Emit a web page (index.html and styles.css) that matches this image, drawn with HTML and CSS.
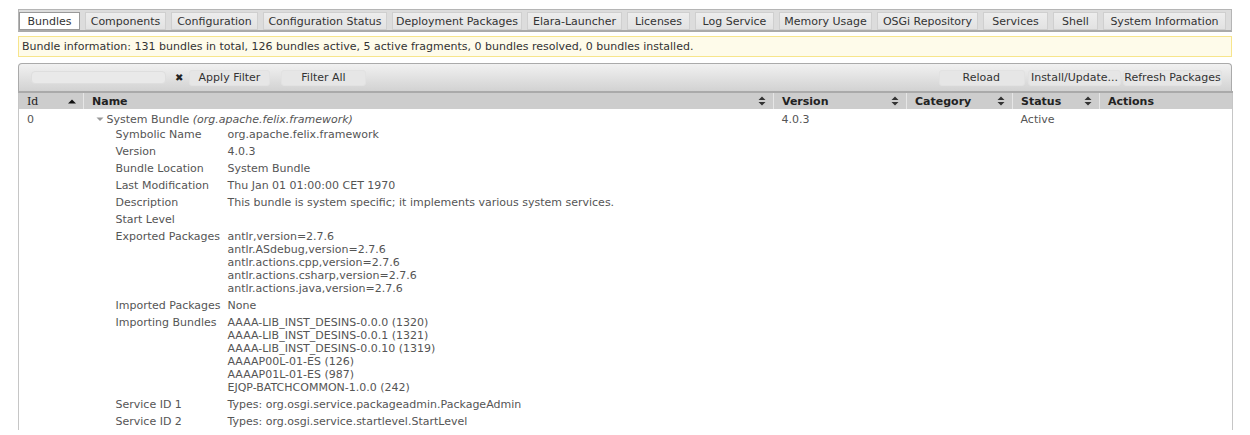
FILE: index.html
```html
<!DOCTYPE html>
<html>
<head>
<meta charset="utf-8">
<title>Bundles</title>
<link rel="stylesheet" href="styles.css">
</head>
<body>
<div class="page">
  <div class="tabs">
    <a class="tab active">Bundles</a>
    <a class="tab">Components</a>
    <a class="tab">Configuration</a>
    <a class="tab">Configuration Status</a>
    <a class="tab">Deployment Packages</a>
    <a class="tab">Elara-Launcher</a>
    <a class="tab">Licenses</a>
    <a class="tab">Log Service</a>
    <a class="tab">Memory Usage</a>
    <a class="tab">OSGi Repository</a>
    <a class="tab">Services</a>
    <a class="tab">Shell</a>
    <a class="tab">System Information</a>
  </div>
  <div class="status">Bundle information: 131 bundles in total, 126 bundles active, 5 active fragments, 0 bundles resolved, 0 bundles installed.</div>
  <div class="toolbar">
    <div class="tb-left">
      <span class="filter-input"></span>
      <span class="clear">&#10006;</span>
      <span class="btn btn-apply">Apply Filter</span>
      <span class="btn btn-all">Filter All</span>
    </div>
    <div class="tb-right">
      <span class="btn btn-reload">Reload</span>
      <span class="btn btn-install">Install/Update...</span>
      <span class="btn btn-refresh">Refresh Packages</span>
    </div>
  </div>
  <table class="grid">
    <colgroup>
      <col class="c-id"><col class="c-name"><col class="c-ver"><col class="c-cat"><col class="c-status"><col class="c-act">
    </colgroup>
    <thead>
      <tr>
        <th><div class="th-in"><span class="id-label">Id</span><svg class="sort" width="8" height="9" viewBox="0 0 8 9"><path d="M0 6.5 L4 2.5 L8 6.5 Z" fill="#111"/></svg></div></th>
        <th><div class="th-in"><span>Name</span><svg class="sort" width="8" height="10" viewBox="0 0 8 10"><path d="M0.5 4 L4 0.5 L7.5 4 Z M0.5 6 L4 9.5 L7.5 6 Z" fill="#333"/></svg></div></th>
        <th><div class="th-in"><span>Version</span><svg class="sort" width="8" height="10" viewBox="0 0 8 10"><path d="M0.5 4 L4 0.5 L7.5 4 Z M0.5 6 L4 9.5 L7.5 6 Z" fill="#333"/></svg></div></th>
        <th><div class="th-in"><span>Category</span><svg class="sort" width="8" height="10" viewBox="0 0 8 10"><path d="M0.5 4 L4 0.5 L7.5 4 Z M0.5 6 L4 9.5 L7.5 6 Z" fill="#333"/></svg></div></th>
        <th><div class="th-in"><span>Status</span><svg class="sort" width="8" height="10" viewBox="0 0 8 10"><path d="M0.5 4 L4 0.5 L7.5 4 Z M0.5 6 L4 9.5 L7.5 6 Z" fill="#333"/></svg></div></th>
        <th><div class="th-in"><span>Actions</span></div></th>
      </tr>
    </thead>
    <tbody>
      <tr>
        <td>0</td>
        <td>
          <div class="summary"><svg class="twisty" width="8" height="6" viewBox="0 0 8 6"><path d="M0.5 1.5 L7.5 1.5 L4 5 Z" fill="#999"/></svg>System Bundle <i>(org.apache.felix.framework)</i></div>
          <table class="details">
            <tr><td class="k">Symbolic Name</td><td>org.apache.felix.framework</td></tr>
            <tr><td class="k">Version</td><td>4.0.3</td></tr>
            <tr><td class="k">Bundle Location</td><td>System Bundle</td></tr>
            <tr><td class="k">Last Modification</td><td>Thu Jan 01 01:00:00 CET 1970</td></tr>
            <tr><td class="k">Description</td><td>This bundle is system specific; it implements various system services.</td></tr>
            <tr><td class="k">Start Level</td><td></td></tr>
            <tr><td class="k">Exported Packages</td><td>antlr,version=2.7.6<br>antlr.ASdebug,version=2.7.6<br>antlr.actions.cpp,version=2.7.6<br>antlr.actions.csharp,version=2.7.6<br>antlr.actions.java,version=2.7.6</td></tr>
            <tr><td class="k">Imported Packages</td><td>None</td></tr>
            <tr><td class="k">Importing Bundles</td><td>AAAA-LIB_INST_DESINS-0.0.0 (1320)<br>AAAA-LIB_INST_DESINS-0.0.1 (1321)<br>AAAA-LIB_INST_DESINS-0.0.10 (1319)<br>AAAAP00L-01-ES (126)<br>AAAAP01L-01-ES (987)<br>EJQP-BATCHCOMMON-1.0.0 (242)</td></tr>
            <tr><td class="k">Service ID 1</td><td>Types: org.osgi.service.packageadmin.PackageAdmin</td></tr>
            <tr><td class="k">Service ID 2</td><td>Types: org.osgi.service.startlevel.StartLevel</td></tr>
          </table>
        </td>
        <td>4.0.3</td>
        <td></td>
        <td>Active</td>
        <td></td>
      </tr>
    </tbody>
  </table>
</div>
</body>
</html>
```

FILE: styles.css
```css
html, body {
  margin: 0;
  background: #fff;
  overflow: hidden;
}
body {
  font-family: "DejaVu Sans", sans-serif;
  font-size: 11px;
  color: #333;
}
.page {
  padding: 9px 18px 0 18px;
}
.tabs {
  display: flex;
  gap: 5px;
  border: 1px solid #b5b5b5;
  border-bottom: 2px solid #aaa;
  background: #dcdcdc;
  padding: 2px 1px 0 0;
  height: 18px;
}
.tab {
  display: flex;
  align-items: center;
  justify-content: center;
  flex: none;
  border: 1px solid #cfcfcf;
  background: linear-gradient(#ededed, #e2e2e2);
  color: #333;
  white-space: nowrap;
  box-sizing: border-box;
  height: 18px;
}
.tab:nth-child(1) { width: 61px; }
.tab:nth-child(2) { width: 81px; }
.tab:nth-child(3) { width: 87px; }
.tab:nth-child(4) { width: 124px; }
.tab:nth-child(5) { width: 130px; }
.tab:nth-child(6) { width: 95px; }
.tab:nth-child(7) { width: 63px; }
.tab:nth-child(8) { width: 79px; }
.tab:nth-child(9) { width: 93px; }
.tab:nth-child(10) { width: 101px; }
.tab:nth-child(11) { width: 65px; }
.tab:nth-child(12) { width: 45px; }
.tab:nth-child(13) { width: 123px; }
.tab.active {
  background: #fff;
  border-color: #999;
}
.status {
  margin-top: 4px;
  height: 19px;
  line-height: 19px;
  border: 1px solid #f7e58c;
  background: #fefbea;
  padding-left: 3px;
  color: #333;
}
.toolbar {
  margin-top: 6px;
  height: 27px;
  border: 1px solid #aaa;
  border-bottom: none;
  border-radius: 4px 4px 0 0;
  background: linear-gradient(#f1f1f1, #d2d2d2);
  display: flex;
  justify-content: space-between;
  align-items: center;
  padding: 0 9px 0 12px;
}
.tb-left, .tb-right {
  display: flex;
  align-items: center;
}
.filter-input {
  width: 133px;
  height: 11px;
  border: 1px solid #dedede;
  border-radius: 4px;
  background: #e9e9e9;
}
.clear {
  margin-left: 9px;
  font-size: 10px;
  color: #222;
  font-weight: bold;
  width: 14px;
}
.btn {
  height: 14px;
  line-height: 14px;
  border: 1px solid #e2e2e2;
  border-radius: 3px;
  background: #e6e6e6;
  color: #333;
  text-align: center;
  white-space: nowrap;
}
.btn-apply { width: 79px; }
.btn-all { width: 83px; margin-left: 11px; }
.btn-reload { text-align: right; padding-right: 24px; width: 60px; }
.btn-install { width: 91px; margin-left: 3px; }
.btn-refresh { width: 97px; margin-left: 2px; }

.grid {
  width: 100%;
  border-collapse: collapse;
  table-layout: fixed;
  border-left: 1px solid #c6c6c6;
  border-right: 1px solid #c6c6c6;
}
.c-id { width: 65px; }
.c-name { width: 690px; }
.c-ver { width: 133px; }
.c-cat { width: 106px; }
.c-status { width: 87px; }
.c-act { width: 133px; }
.grid th {
  background: #cdcdcd;
  border-top: 2px solid #aaa;
  border-left: 1px solid #e6e6e6;
  height: 16px;
  padding: 0 0 0 8px;
  text-align: left;
  font-weight: bold;
  color: #222;
  font-size: 11px;
}
.grid th:first-child { border-left: none; }
.id-label {
  font-family: "DejaVu Serif", serif;
  font-weight: normal;
}
.th-in {
  display: flex;
  align-items: center;
  justify-content: space-between;
  padding-right: 7px;
}
.sort { display: block; }
.grid > tbody > tr > td {
  vertical-align: top;
  padding: 4px 0 0 8px;
  line-height: 13px;
  color: #555;
}
.summary {
  padding-left: 4px;
  white-space: nowrap;
}
.twisty {
  margin-right: 3px;
  vertical-align: 1px;
}
.details {
  border-collapse: collapse;
  margin-left: 24px;
}
.details td {
  padding: 2px 0;
  line-height: 13px;
  vertical-align: top;
  color: #555;
  white-space: nowrap;
}
.details td.k {
  width: 112px;
}
```
